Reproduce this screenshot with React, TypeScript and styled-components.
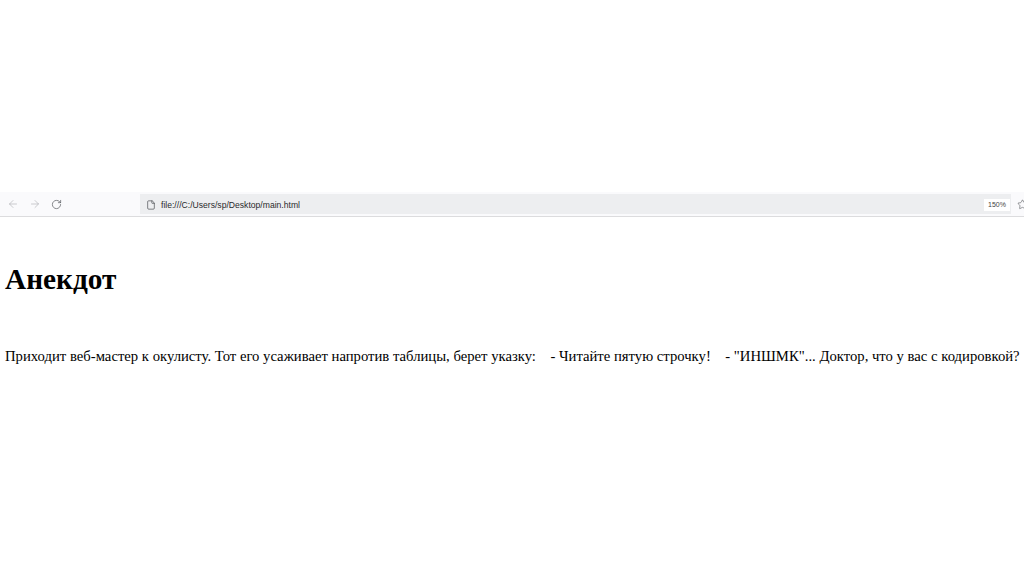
import React from 'react';
import styled, { createGlobalStyle } from 'styled-components';
import { ArrowLeft, ArrowRight, RotateCw, File, Star } from 'lucide-react';

const GlobalStyle = createGlobalStyle`
  html, body {
    margin: 0;
    padding: 0;
    background: #fff;
    overflow: hidden;
  }
`;

function App() {
  return (
    <>
      <GlobalStyle />
      <Page>
        <Toolbar>
          <NavButtons>
            <ArrowLeft size={12} color="#b4b6ba" strokeWidth={1.4} />
            <ArrowRight size={12} color="#b4b6ba" strokeWidth={1.4} />
            <RotateCw size={11} color="#55585c" strokeWidth={1.5} />
          </NavButtons>
          <AddressBar>
            <File size={10} color="#44474b" strokeWidth={1.6} />
            <Url>file:///C:/Users/sp/Desktop/main.html</Url>
            <Zoom>150%</Zoom>
          </AddressBar>
          <StarButton>
            <Star size={11} color="#55585c" strokeWidth={1.3} />
          </StarButton>
        </Toolbar>
        <Content>
          <Title>Анекдот</Title>
          <Joke>
            Приходит веб-мастер к окулисту. Тот его усаживает напротив таблицы, берет указку:
            <Gap />- Читайте пятую строчку!
            <Gap />- "ИНШМК"... Доктор, что у вас с кодировкой?
          </Joke>
        </Content>
      </Page>
    </>
  );
}

export default App;

const Page = styled.div`
  width: 1024px;
  height: 574px;
  padding-top: 192px;
  box-sizing: border-box;
  overflow: hidden;
`;

const Toolbar = styled.div`
  display: flex;
  align-items: center;
  height: 24px;
  background: #fafafc;
  border-bottom: 1px solid #dcdcde;
  overflow: hidden;
`;

const NavButtons = styled.div`
  flex: none;
  display: flex;
  align-items: center;
  gap: 10px;
  width: 140px;
  padding-left: 7px;
  box-sizing: border-box;
`;

const AddressBar = styled.div`
  flex: none;
  display: flex;
  align-items: center;
  width: 871px;
  height: 20px;
  padding: 1px 6px 0;
  box-sizing: border-box;
  background: #edeef0;
`;

const Url = styled.span`
  flex: 1;
  margin-left: 5px;
  font: 8.6px 'Liberation Sans', Arial, sans-serif;
  color: #2a2a2c;
`;

const Zoom = styled.span`
  width: 26px;
  height: 12px;
  margin-right: -5px;
  background: #fff;
  font: 7px/12px 'Liberation Sans', Arial, sans-serif;
  color: #444;
  text-align: center;
`;

const StarButton = styled.div`
  flex: none;
  display: flex;
  margin-left: 6px;
`;

const Content = styled.div`
  padding: 46px 0 0 5px;
`;

const Title = styled.h1`
  margin: 0;
  font: bold 29.3px/32px 'Liberation Serif', 'Times New Roman', serif;
  color: #000;
`;

const Joke = styled.p`
  margin: 52px 0 0;
  font: 14.7px/18px 'Liberation Serif', 'Times New Roman', serif;
  color: #000;
  white-space: nowrap;
`;

const Gap = styled.span`
  display: inline-block;
  width: 14.5px;
`;
